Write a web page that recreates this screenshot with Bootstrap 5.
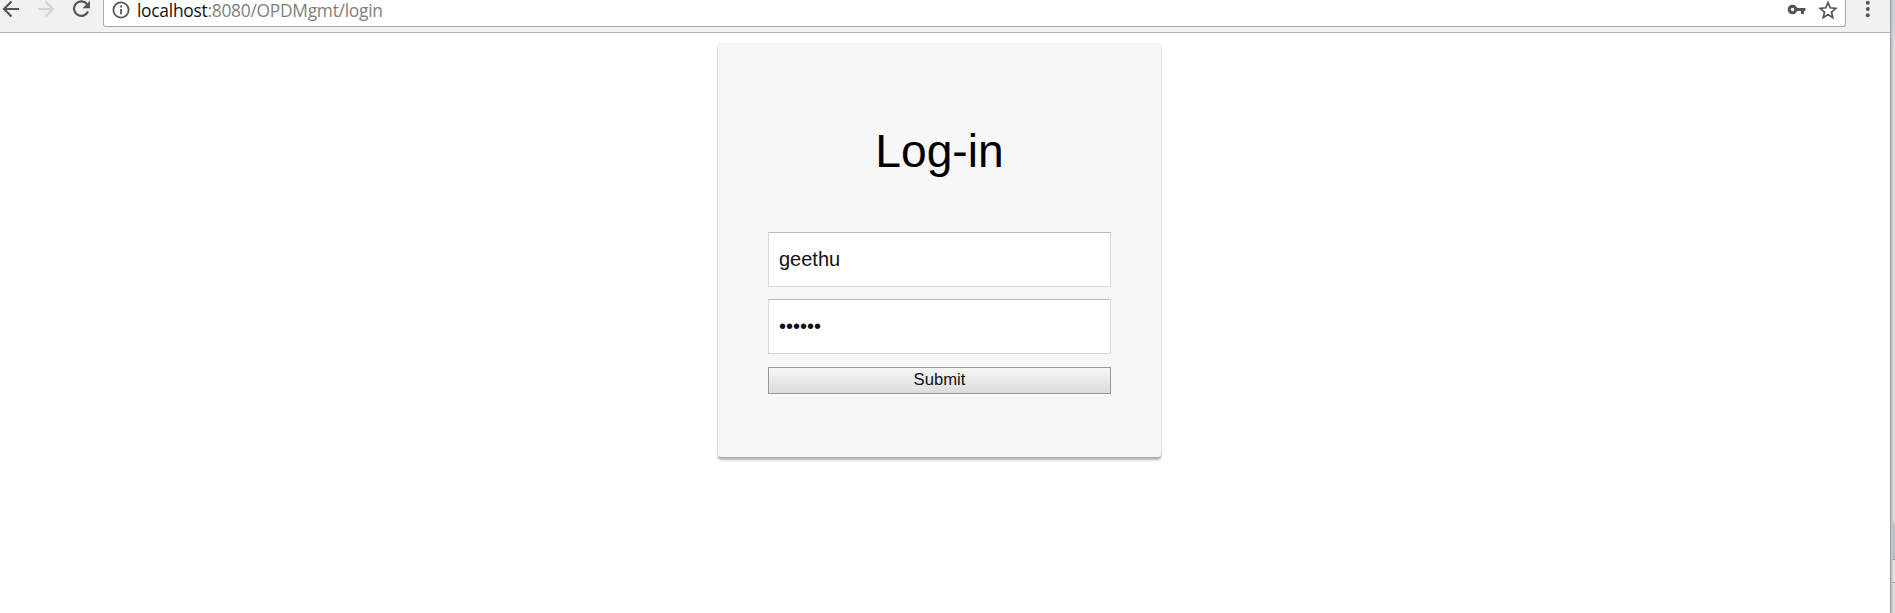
<!DOCTYPE html>
<html lang="en">
<head>
<meta charset="utf-8">
<title>Log-in</title>
<link href="https://cdn.jsdelivr.net/npm/bootstrap@5.3.0/dist/css/bootstrap.min.css" rel="stylesheet">
<style>
body{height:613px;background:#fff;color:#000;font-family:"Liberation Sans",Arial,sans-serif}
.window{width:1891px;height:613px;border-right:1px solid #9a9a9a}
.toolbar{height:33px;background:#f1f1f1;border-bottom:1px solid #b0b0b0}
.toolbar svg{display:block;flex:none}
.nav-icons{width:103px;height:27px}
.omnibox{height:27px;background:#fff;border:1px solid #a9a9a9;border-top:0;border-radius:0 0 3px 3px;width:1743px}
.url{font:17.4px/24px "Open Sans","Noto Sans",sans-serif;letter-spacing:-.27px;color:#808080;height:24px;margin-top:-2px;margin-left:7px;white-space:nowrap}
.url b{font-weight:inherit;color:#111}
.login-card{width:443px;height:413px;margin:11px 0 0 718px;padding:0 50px;background:#f7f7f7;border-radius:3px;box-shadow:0 2.5px 2.5px rgba(0,0,0,.3),0 0 2px rgba(0,0,0,.15)}
.login-card h1{font-size:46.2px;line-height:54px;font-weight:400;margin:80px 0 54px}
.field{height:55px;border:1px solid #d9d9d9;border-top-color:#b9b9b9;border-radius:0;padding:0 10px 1px;font-size:20px;color:#111;margin-bottom:12px;background:#fff}
.field:last-of-type{margin-bottom:13px}
.submit{height:27px;border:1px solid #999;border-radius:0;background:linear-gradient(#f6f6f6,#dcdcdc);font-size:16.67px;line-height:23px;padding:0 0 2px;color:#111}
.backdrop{width:4px;border-left:2px solid #c6c6c6;background:linear-gradient(#ccd2e0 0 20px,#dfdfe2 50px,#e0e0e0 60px 520px,#b4bfcc 526px 559px,#8f969d 559px 560px,#e4e4e4 560px 582px,#888 582px 583px,#e0e0e0 583px)}
</style>
</head>
<body class="d-flex overflow-hidden">
<div class="window">
<header class="toolbar d-flex">
<svg class="nav-icons" viewBox="0 0 103 27" fill="none" stroke="#555" stroke-width="2.2">
<path d="M19 9H4M11.5 1.5 4 9l7.500 7.500"/>
<path stroke="#d2d2d2" d="M38 9h15M45.500 1.500 53 9l-7.500 7.500"/>
<path d="M87.200 4.300A7.300 7.300 0 1 0 88 11.500"/><path fill="#555" stroke="none" d="M90 .8v7.500h-7.500z"/>
</svg>
<div class="omnibox d-flex">
<svg width="26" height="26" viewBox="104 0 26 26" fill="none" stroke="#555" stroke-width="1.8"><circle cx="121" cy="10" r="7.600"/><path d="M121 9v5.300M121 5.500v2"/></svg>
<div class="url"><b>localhost</b>:8080/OPDMgmt/login</div>
<svg class="ms-auto" width="65" height="26" viewBox="1780 0 65 26"><g fill="none" stroke="#555"><circle cx="1792.500" cy="9.500" r="3.300" stroke-width="3"/><path stroke-width="3" d="M1796 9.500h9.500M1802.500 9.500v4.500"/><path stroke-width="1.700" d="m1828 2.500 2.200 5.300 5.600.5-4.300 3.700 1.300 5.600-4.800-3-4.800 3 1.300-5.600-4.300-3.700 5.600-.5z"/></g></svg>
</div>
<svg width="44" height="26" viewBox="1846 0 44 26" fill="#555"><circle cx="1867.800" cy="2.700" r="2"/><circle cx="1867.800" cy="9" r="2"/><circle cx="1867.800" cy="15.300" r="2"/></svg>
</header>
<main class="login-card d-flow-root overflow-visible">
<form class="d-flex flex-column">
<h1 class="text-center">Log-in</h1>
<input class="field w-100" type="text" value="geethu" aria-label="Username">
<input class="field w-100" type="password" value="geethu" aria-label="Password">
<button class="submit w-100" type="button">Submit</button>
</form>
</main>
</div>
<div class="backdrop"></div>
</body>
</html>
